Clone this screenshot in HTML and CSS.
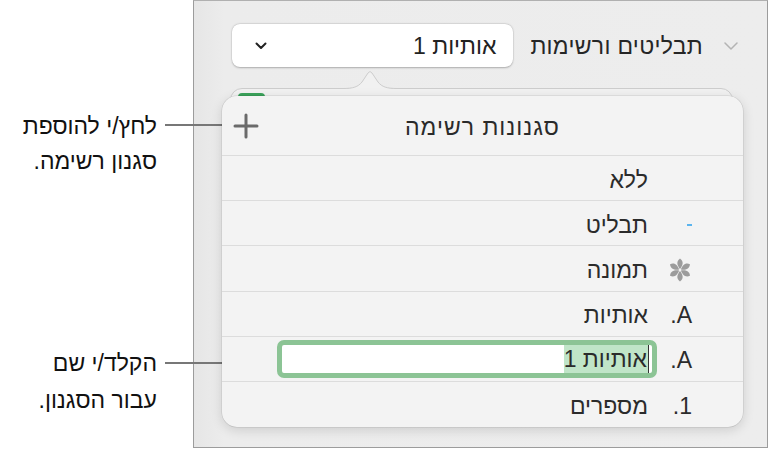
FILE: index.html
```html
<!DOCTYPE html>
<html lang="he">
<head>
    <meta charset="UTF-8">
    <title>סגנונות רשימה</title>
    <link rel="stylesheet" href="styles.css">
</head>
<body>
    <div class="figure">
        <div class="callouts" dir="rtl">
            <p class="callout callout-add">לחץ/י להוספת<br>סגנון רשימה.</p>
            <p class="callout callout-name">הקלד/י שם<br>עבור הסגנון.</p>
        </div>

        <div class="panel" dir="rtl">
            <div class="section-head">
                <svg class="section-chevron" width="14" height="8" viewBox="0 0 14 8">
                    <path d="M1 1 L7 7 L13 1" fill="none" stroke="#b4b4b4" stroke-width="1.5" stroke-linecap="round" stroke-linejoin="round"/>
                </svg>
                <span class="section-title">תבליטים ורשימות</span>
                <div class="style-select">
                    <span class="style-select-value">אותיות 1</span>
                    <svg width="12" height="8" viewBox="0 0 12 8">
                        <path d="M1.5 1.5 L6 6 L10.5 1.5" fill="none" stroke="#222" stroke-width="2" stroke-linecap="round" stroke-linejoin="round"/>
                    </svg>
                </div>
            </div>

            <div class="popover-wrap">
                <div class="behind">
                    <span class="behind-green"></span>
                    <svg class="behind-arrow" width="54" height="22" viewBox="0 0 54 22">
                        <path d="M0 19.5 C10 19.5 15 18 19 13 L25 4 Q27 1 29 4 L35 13 C39 18 44 19.5 54 19.5 L54 22 L0 22 Z" fill="#f1f1f1"/>
                        <path d="M0 19.5 C10 19.5 15 18 19 13 L25 4 Q27 1 29 4 L35 13 C39 18 44 19.5 54 19.5" fill="none" stroke="#cdcdcd" stroke-width="1"/>
                    </svg>
                </div>

                <div class="popover">
                    <div class="popover-head">
                        <span></span>
                        <span class="popover-title">סגנונות רשימה</span>
                        <span class="add-cell">
                            <svg class="add-icon" width="26" height="26" viewBox="0 0 26 26">
                                <path d="M13 2 V24 M2 13 H24" stroke="#6a6a6a" stroke-width="3" stroke-linecap="round"/>
                            </svg>
                        </span>
                    </div>
                    <ul class="style-list">
                        <li class="style-row">
                            <span class="marker"></span>
                            <span class="style-name">ללא</span>
                        </li>
                        <li class="style-row">
                            <span class="marker"><span class="bullet-dash"></span></span>
                            <span class="style-name">תבליט</span>
                        </li>
                        <li class="style-row">
                            <span class="marker">
                                <svg width="24" height="24" viewBox="-12 -12 24 24">
                                    <g fill="#9c9c9c">
                                        <path id="petal" d="M0 -1 C-2.8 -4.5 -4.2 -8.5 0 -11.5 C4.2 -8.5 2.8 -4.5 0 -1 Z"/>
                                        <use href="#petal" transform="rotate(60)"/>
                                        <use href="#petal" transform="rotate(120)"/>
                                        <use href="#petal" transform="rotate(180)"/>
                                        <use href="#petal" transform="rotate(240)"/>
                                        <use href="#petal" transform="rotate(300)"/>
                                    </g>
                                </svg>
                            </span>
                            <span class="style-name">תמונה</span>
                        </li>
                        <li class="style-row">
                            <span class="marker"><span dir="ltr">.A</span></span>
                            <span class="style-name">אותיות</span>
                        </li>
                        <li class="style-row editing">
                            <span class="marker"><span dir="ltr">.A</span></span>
                            <span class="name-field"><span class="name-selected">אותיות 1</span></span>
                        </li>
                        <li class="style-row">
                            <span class="marker"><span dir="ltr">.1</span></span>
                            <span class="style-name">מספרים</span>
                        </li>
                    </ul>
                </div>
            </div>
        </div>
    </div>
</body>
</html>
```

FILE: styles.css
```css
body {
    margin: 0;
    background: #fff;
    font-family: "Liberation Sans", "DejaVu Sans", sans-serif;
    color: #2b2b2b;
}

.figure {
    display: flex;
    width: 769px;
    height: 450px;
}

/* annotations on the left */
.callouts {
    width: 193px;
    flex-shrink: 0;
    padding: 109px 36px 0 0;
    box-sizing: border-box;
}

.callout {
    position: relative;
    margin: 0;
    font-size: 23px;
    line-height: 35px;
    color: #111;
    text-align: right;
}

.callout::after {
    content: "";
    position: absolute;
    top: 15px;
    left: calc(100% + 8px);
    height: 1.5px;
    background: #777;
}

.callout-add::after {
    width: 68px;
}

.callout-name {
    margin-top: 166px;
    line-height: 37px;
}

.callout-name::after {
    top: 17px;
    width: 113px;
}

/* inspector panel */
.panel {
    width: 575px;
    height: 448px;
    box-sizing: border-box;
    border: 1px solid #9c9c9c;
    border-top-color: #b0b0b0;
    background: linear-gradient(to right, #e6e6e6, #ececec 30px, #ededed);
    display: flex;
    flex-direction: column;
}

.section-head {
    display: flex;
    align-items: center;
    height: 43px;
    margin-top: 23px;
    padding-right: 29px;
}

.section-chevron {
    margin-left: 21px;
}

.section-title {
    font-size: 23px;
    letter-spacing: 0.3px;
    color: #262626;
    margin-left: 17px;
    padding-top: 2px;
}

.style-select {
    width: 281px;
    height: 43px;
    box-sizing: border-box;
    background: #fff;
    border-radius: 8px;
    box-shadow: 0 0.5px 2px rgba(0, 0, 0, 0.25), 0 0 0 0.5px rgba(0, 0, 0, 0.06);
    display: flex;
    align-items: center;
    justify-content: space-between;
    padding: 0 17px 0 23px;
    font-size: 23px;
    color: #222;
}

.style-select-value {
    padding-top: 2px;
}

/* popover */
.popover-wrap {
    position: relative;
    margin: 29px 24px 0 28px;
}

.behind {
    position: absolute;
    top: -8px;
    left: 8px;
    right: 10px;
    height: 40px;
    background: #f1f1f1;
    border: 1px solid #cdcdcd;
    border-radius: 12px;
}

.behind-green {
    position: absolute;
    top: 4px;
    left: 7px;
    width: 27px;
    height: 6px;
    border-radius: 4px 4px 0 0;
    background: #3ba35b;
}

.behind-arrow {
    position: absolute;
    top: -20px;
    left: 112px;
}

.popover {
    position: relative;
    height: 331px;
    background: #f3f3f3;
    border-radius: 15px;
    box-shadow: 0 0 0 0.5px rgba(0, 0, 0, 0.12), 0 3px 12px rgba(0, 0, 0, 0.14);
    overflow: hidden;
}

.popover-head {
    display: grid;
    grid-template-columns: 1fr auto 1fr;
    align-items: center;
    height: 59px;
    border-bottom: 1.5px solid #dcdcdc;
}

.popover-title {
    font-size: 23px;
    letter-spacing: 1px;
    color: #2a2a2a;
    padding-top: 3px;
}

.add-cell {
    justify-self: end;
    padding-left: 11px;
    display: flex;
}

.style-list {
    list-style: none;
    margin: 0;
    padding: 0;
}

.style-row {
    display: flex;
    align-items: center;
    height: 45.2px;
    box-sizing: border-box;
    border-bottom: 1.5px solid #dcdcdc;
    padding-right: 51px;
    font-size: 23px;
    color: #2b2b2b;
}

.style-row:last-child {
    border-bottom: none;
}

.marker {
    width: 28px;
    margin-left: 16px;
    display: flex;
    justify-content: flex-start;
    align-items: center;
    padding-top: 3px;
}

.bullet-dash {
    width: 5px;
    height: 2px;
    background: #5bb4ee;
}

.style-name {
    padding-top: 4px;
}

.style-row.editing .marker {
    margin-left: 7px;
}

.name-field {
    width: 380px;
    height: 38px;
    box-sizing: border-box;
    border: 5px solid #8cc495;
    border-radius: 7px;
    background: #fff;
    display: flex;
    align-items: stretch;
    padding-right: 3px;
}

.name-selected {
    background: #c0e5c8;
    border-right: 1.5px solid #333;
    padding: 2px 1px 0 0;
    display: flex;
    align-items: center;
}
```
